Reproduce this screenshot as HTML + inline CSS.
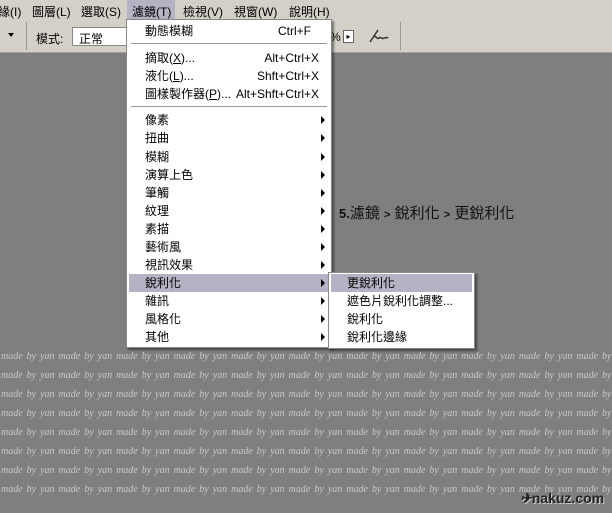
<!DOCTYPE html>
<html><head><meta charset="utf-8"><style>
*{margin:0;padding:0;box-sizing:border-box}
body{width:612px;height:513px;overflow:hidden;background:#7f7f7f;position:relative;font-family:"Liberation Sans","Noto Sans CJK TC",sans-serif;font-size:12px;color:#000}
.bar{position:absolute;left:0;top:0;width:612px;height:20px;background:#d4d0c8}
.bar span{position:absolute;top:3px}
.tool{position:absolute;left:0;top:20px;width:612px;height:33px;background:#d4d0c8;border-bottom:1px solid #a0a0a0}
.menu{position:absolute;background:#fff;border:1px solid #888;box-shadow:2px 2px 2px rgba(0,0,0,.45)}
.it{position:absolute;left:0;right:0;height:18px;line-height:18px;padding-left:18px}
.it .k{position:absolute;right:20px;top:0}
.it .a{position:absolute;right:6px;top:5px;width:0;height:0;border-left:4px solid #000;border-top:4px solid transparent;border-bottom:4px solid transparent}
.sep{position:absolute;left:4px;right:4px;height:2px;border-top:1px solid #999;border-bottom:1px solid #fff}
.hl{background:#b5b2c4}
.wm{position:absolute;left:1px;width:612px;white-space:nowrap;overflow:hidden;color:#c8c8c8;font-family:"Liberation Serif",serif;font-style:italic;font-size:10px;word-spacing:1.5px;letter-spacing:0px}
</style></head><body>
<div class="bar">
<span style="left:-2px">緣(I)</span><span style="left:32px">圖層(L)</span><span style="left:81px">選取(S)</span>
<span style="left:127px;top:0;height:20px;width:48px;background:#b5b2c4"></span><span style="left:132px">濾鏡(T)</span>
<span style="left:183px">檢視(V)</span><span style="left:234px">視窗(W)</span><span style="left:289px">說明(H)</span>
</div>
<div class="tool">
<span style="position:absolute;left:8px;top:13px;border-top:4px solid #000;border-left:3px solid transparent;border-right:3px solid transparent"></span>
<span style="position:absolute;left:26px;top:2px;width:1px;height:28px;background:#999"></span>
<span style="position:absolute;left:36px;top:10px">模式:</span>
<span style="position:absolute;left:72px;top:7px;width:60px;height:19px;background:#fff;border:1px solid #888;padding:2px 6px">正常</span>
<span style="position:absolute;left:330px;top:10px">%</span>
<span style="position:absolute;left:343px;top:10px;width:11px;height:13px;background:#fff;border:1px solid #666;font-size:8px;line-height:11px;text-align:center">▸</span>
<svg style="position:absolute;left:368px;top:8px" width="22" height="16" viewBox="0 0 22 16"><path d="M2 14 L10 2 M6 9 C8 7 9 12 11 10 C13 8 14 12 16 10 C17 9 18 11 20 9" fill="none" stroke="#333" stroke-width="1.5"/></svg>
<span style="position:absolute;left:400px;top:2px;width:1px;height:28px;background:#999"></span>
</div>
<div style="position:absolute;left:339px;top:202px;font-size:15px;color:#111"><b style="font-size:13px">5.</b>濾鏡 <span style="font-size:11px;font-weight:bold">&gt;</span> 銳利化 <span style="font-size:11px;font-weight:bold">&gt;</span> 更銳利化</div>
<div class="wm" style="top:351px">made by yan made by yan made by yan made by yan made by yan made by yan made by yan made by yan made by yan made by yan made by yan made by yan made by yan made by yan made by yan</div>
<div class="wm" style="top:370px">made by yan made by yan made by yan made by yan made by yan made by yan made by yan made by yan made by yan made by yan made by yan made by yan made by yan made by yan made by yan</div>
<div class="wm" style="top:389px">made by yan made by yan made by yan made by yan made by yan made by yan made by yan made by yan made by yan made by yan made by yan made by yan made by yan made by yan made by yan</div>
<div class="wm" style="top:408px">made by yan made by yan made by yan made by yan made by yan made by yan made by yan made by yan made by yan made by yan made by yan made by yan made by yan made by yan made by yan</div>
<div class="wm" style="top:427px">made by yan made by yan made by yan made by yan made by yan made by yan made by yan made by yan made by yan made by yan made by yan made by yan made by yan made by yan made by yan</div>
<div class="wm" style="top:446px">made by yan made by yan made by yan made by yan made by yan made by yan made by yan made by yan made by yan made by yan made by yan made by yan made by yan made by yan made by yan</div>
<div class="wm" style="top:465px">made by yan made by yan made by yan made by yan made by yan made by yan made by yan made by yan made by yan made by yan made by yan made by yan made by yan made by yan made by yan</div>
<div class="wm" style="top:484px">made by yan made by yan made by yan made by yan made by yan made by yan made by yan made by yan made by yan made by yan made by yan made by yan made by yan made by yan made by yan</div>
<div style="position:absolute;left:520px;top:490px;font-weight:bold;font-size:14px;color:#222;text-shadow:1px 1px 0 #ccc"><span style="font-style:italic">✈</span>nakuz.com</div>
<div class="menu" style="left:126px;top:19px;width:206px;height:329px">
<div class="it" style="top:2px">動態模糊<span class="k">Ctrl+F</span></div>
<div class="sep" style="top:23px"></div>
<div class="it" style="top:29px">摘取(<u>X</u>)...<span class="k" style="right:12px">Alt+Ctrl+X</span></div>
<div class="it" style="top:47px">液化(<u>L</u>)...<span class="k" style="right:12px">Shft+Ctrl+X</span></div>
<div class="it" style="top:65px">圖樣製作器(<u>P</u>)...<span class="k" style="right:12px">Alt+Shft+Ctrl+X</span></div>
<div class="sep" style="top:86px"></div>
<div class="it" style="top:91px">像素<span class="a"></span></div>
<div class="it" style="top:109px">扭曲<span class="a"></span></div>
<div class="it" style="top:128px">模糊<span class="a"></span></div>
<div class="it" style="top:146px">演算上色<span class="a"></span></div>
<div class="it" style="top:164px">筆觸<span class="a"></span></div>
<div class="it" style="top:182px">紋理<span class="a"></span></div>
<div class="it" style="top:200px">素描<span class="a"></span></div>
<div class="it" style="top:218px">藝術風<span class="a"></span></div>
<div class="it" style="top:236px">視訊效果<span class="a"></span></div>
<div class="it hl" style="top:254px;left:2px;right:2px;padding-left:16px">銳利化<span class="a" style="right:4px"></span></div>
<div class="it" style="top:272px">雜訊<span class="a"></span></div>
<div class="it" style="top:290px">風格化<span class="a"></span></div>
<div class="it" style="top:308px">其他<span class="a"></span></div>
</div>
<div class="menu" style="left:328px;top:272px;width:147px;height:77px">
<div class="it hl" style="top:1px;left:2px;right:2px;padding-left:16px">更銳利化</div>
<div class="it" style="top:19px">遮色片銳利化調整...</div>
<div class="it" style="top:37px">銳利化</div>
<div class="it" style="top:55px">銳利化邊緣</div>
</div>
</body></html>
